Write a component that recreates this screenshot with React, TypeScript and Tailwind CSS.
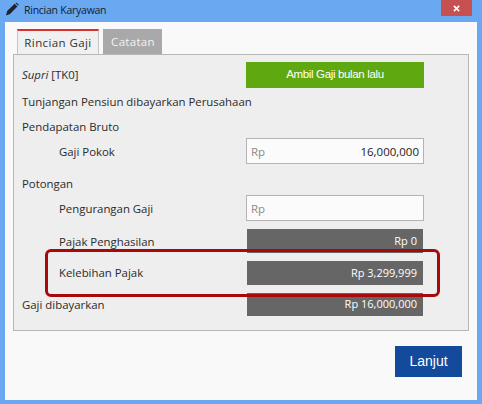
const uiFont = "font-['Open_Sans','Noto_Sans',sans-serif]"
const label = 'text-[11.4px] text-[#2b2b2b]'

function DarkValue({ value, height }: { value: string; height: string }) {
  return (
    <div className={`ml-auto mr-[1px] flex w-[176px] items-center justify-end bg-[#666666] pr-[6px] text-[11px] text-white ${height}`}>
      {value}
    </div>
  )
}

function RpInput({ value }: { value?: string }) {
  return (
    <div className="ml-auto flex h-[26px] w-[178px] items-center justify-between border border-[#b4b4b4] bg-[#fbfbfb] pl-[4px] pr-[4px] pt-[2px] text-[11.5px]">
      <span className="text-[#8a8a8a]">Rp</span>
      {value && <span className="text-[#222222]">{value}</span>}
    </div>
  )
}

export default function App() {
  return (
    <div className={`relative flex h-[404px] w-[482px] flex-col overflow-hidden bg-[#6aa8f2] ${uiFont}`}>
      {/* title bar */}
      <div className="flex h-[22px] shrink-0 items-start">
        <svg viewBox="0 0 14 14" className="ml-[5px] mt-[2px] h-[14px] w-[14px]">
          <path d="M1 13.5 L2.2 9 L9.6 1.8 L12.4 4.6 L5 12 Z" fill="#1c2430" />
          <path d="M10.4 1 L11.4 0.4 L13.8 2.8 L13.2 3.8 Z" fill="#1c2430" />
        </svg>
        <span className="ml-[5px] mt-[2px] text-[10.5px] leading-[16px] tracking-[-0.25px] text-[#14202e]">Rincian Karyawan</span>
        <div className="ml-auto mr-[10px] flex h-[16px] w-[31px] items-center justify-center bg-[#c75050]">
          <svg viewBox="0 0 8 8" className="h-[7px] w-[7px]">
            <path d="M1 1 L7 7 M7 1 L1 7" stroke="#ffffff" strokeWidth="1.8" />
          </svg>
        </div>
      </div>

      {/* client area */}
      <div className="ml-[5px] mr-[5px] flex h-[378px] flex-col bg-[#f9f9f9] pl-[8px] pr-[8px] pt-[7px]">
        <div className="flex h-[25px] items-stretch pl-[4px]">
          <div className="z-10 flex w-[82px] items-center justify-center border-x border-t-2 border-x-[#c4c4c4] border-t-[#d3322e] bg-[#f0f0f0] text-[11.5px] tracking-[0.4px] text-[#333333]">
            Rincian Gaji
          </div>
          <div className="ml-[4px] flex w-[59px] items-center justify-center bg-[#a9a9a9] pl-[1px] text-[11.5px] tracking-[0.3px] text-[#f2f2f2]">
            Catatan
          </div>
        </div>

        <div className="flex h-[277px] w-[456px] flex-col border border-[#b5b8b5] bg-[#eeeeee] pl-[8px] pr-[44px] pt-[7px]">
          <div className="flex h-[26px] items-center">
            <span className={label}><i>Supri</i> [TK0]</span>
            <div className="ml-auto flex h-[26px] w-[178px] items-center justify-center bg-[#5fa80f] font-['Liberation_Sans',sans-serif] text-[11.5px] tracking-[-0.35px] text-white">
              Ambil Gaji bulan lalu
            </div>
          </div>
          <div className={`mt-[4px] flex h-[20px] items-center ${label}`}>Tunjangan Pensiun dibayarkan Perusahaan</div>
          <div className={`mt-[5px] flex h-[20px] items-center ${label}`}>Pendapatan Bruto</div>
          <div className="mt-[1px] flex items-center">
            <span className={`ml-[37px] pt-[2px] ${label}`}>Gaji Pokok</span>
            <RpInput value="16,000,000" />
          </div>
          <div className={`mt-[10px] flex h-[20px] items-center ${label}`}>Potongan</div>
          <div className="mt-[1px] flex items-center">
            <span className={`ml-[37px] pt-[2px] ${label}`}>Pengurangan Gaji</span>
            <RpInput />
          </div>
          <div className="mt-[8px] flex items-center">
            <span className={`ml-[37px] pt-[2px] ${label}`}>Pajak Penghasilan</span>
            <DarkValue value="Rp 0" height="h-[24px]" />
          </div>
          <div className="mt-[8px] flex items-center">
            <span className={`ml-[37px] ${label}`}>Kelebihan Pajak</span>
            <DarkValue value="Rp 3,299,999" height="h-[24px]" />
          </div>
          <div className="mt-[8px] flex items-center">
            <span className={label}>Gaji dibayarkan</span>
            <DarkValue value="Rp 16,000,000" height="h-[23px]" />
          </div>
        </div>

        <div className="mt-[15px] flex justify-end pr-[7px]">
          <div className="flex h-[31px] w-[67px] items-center justify-center bg-[#134a9c] font-['Liberation_Sans',sans-serif] text-[14px] text-white">
            Lanjut
          </div>
        </div>
      </div>

      {/* red annotation drawn over the screenshot */}
      <div className="absolute left-[45px] top-[249px] h-[48px] w-[395px] rounded-[6px] border-[3px] border-[#a80a0c]" />
    </div>
  )
}
